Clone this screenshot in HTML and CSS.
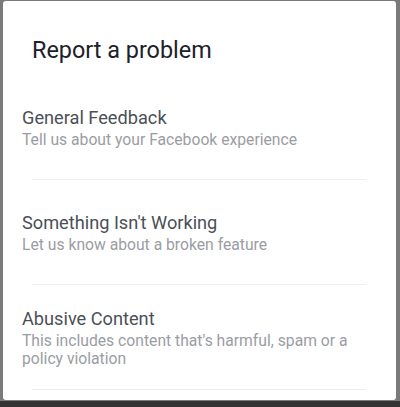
FILE: index.html
```html
<!DOCTYPE html>
<html lang="en">
<head>
    <meta charset="UTF-8">
    <meta name="viewport" content="width=device-width, initial-scale=1.0">
    <title>Report a problem</title>
    <link rel="stylesheet" href="styles.css">
</head>
<body>
    <div class="dialog">
        <h1 class="dialog-title">Report a problem</h1>
        <ul class="options">
            <li class="option">
                <div class="option-title">General Feedback</div>
                <div class="option-text">Tell us about your Facebook experience</div>
            </li>
            <li class="option">
                <div class="option-title">Something Isn't Working</div>
                <div class="option-text">Let us know about a broken feature</div>
            </li>
            <li class="option">
                <div class="option-title">Abusive Content</div>
                <div class="option-text">This includes content that's harmful, spam or a policy violation</div>
            </li>
        </ul>
    </div>
</body>
</html>
```

FILE: styles.css
```css
html, body {
    height: 100%;
}
body {
    margin: 0;
    font-family: Roboto, "Noto Sans", Arial, sans-serif;
    background: #7a7a7a;
    border-bottom: 6px solid #333;
    box-sizing: border-box;
    overflow: hidden;
}
.dialog {
    background: #fff;
    margin: 1px 4px 0 3px;
    height: 399px;
    border-radius: 3px;
    overflow: hidden;
}
.dialog-title {
    margin: 0 0 11px;
    padding: 35px 0 0 29px;
    font-size: 23.4px;
    font-weight: 400;
    line-height: 28px;
    color: #1d2129;
}
.options {
    list-style: none;
    margin: 0;
    padding: 0;
}
.option {
    display: flex;
    flex-direction: column;
    justify-content: center;
    box-sizing: border-box;
    height: 105px;
    padding: 0 30px 0 19px;
    position: relative;
}
.option::after {
    content: "";
    position: absolute;
    left: 29px;
    right: 30px;
    bottom: 0;
    border-bottom: 1px solid #eeeeee;
}
.option-title {
    font-size: 18.2px;
    line-height: 22px;
    color: #4b4f56;
}
.option-text {
    margin-top: 2px;
    font-size: 15.7px;
    line-height: 18px;
    color: #9a9da3;
}
```
